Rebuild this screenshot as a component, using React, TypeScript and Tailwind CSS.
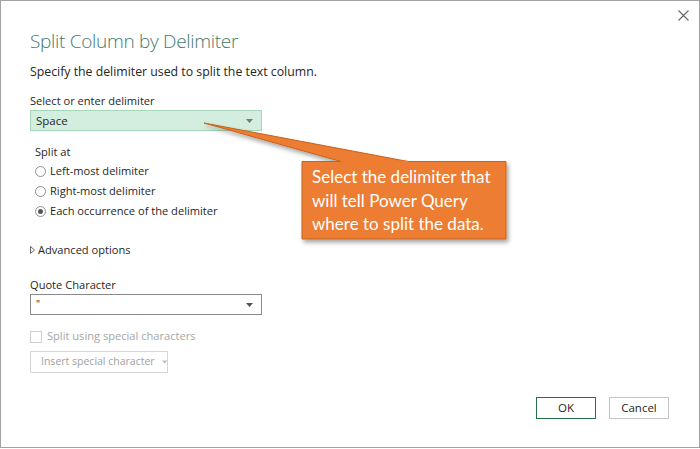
import React from 'react';

function Caret({ className = '' }: { className?: string }) {
  return (
    <svg width="7" height="4" viewBox="0 0 7 4" className={className}>
      <path d="M0 0h7L3.5 4z" fill="currentColor" />
    </svg>
  );
}

function Radio({ label, checked }: { label: string; checked?: boolean }) {
  return (
    <label className="flex items-center gap-[4px] h-[20px]">
      <span className="w-[11px] h-[11px] rounded-full border border-[#8f8f8f] bg-white flex items-center justify-center">
        {checked && <span className="w-[5px] h-[5px] rounded-full bg-[#555]" />}
      </span>
      <span>{label}</span>
    </label>
  );
}

function Callout() {
  return (
    <>
      <svg className="absolute left-0 top-0 pointer-events-none" width="700" height="449">
        <defs>
          <filter id="sh" x="-10%" y="-10%" width="130%" height="140%">
            <feDropShadow dx="2" dy="3" stdDeviation="2" floodColor="#000" floodOpacity="0.35" />
          </filter>
        </defs>
        <g filter="url(#sh)">
          <path
            d="M203 122 L340 160.5 L301 160.5 L301 238 L505 238 L505 160.5 L407 160.5 Z"
            fill="#ed7d31"
            stroke="#c5621c"
            strokeWidth="1"
          />
        </g>
        <path d="M340 160.5 L407 160.5" stroke="#ed7d31" strokeWidth="1.5" />
      </svg>
      <div className="absolute left-[301px] top-[162px] w-[204px] pl-[10px] pt-[2px] text-white text-[17px] leading-[23.5px] font-['Lato','Noto_Sans',sans-serif]">
        Select the delimiter that will tell Power Query where to split the data.
      </div>
    </>
  );
}

export default function App() {
  return (
    <div className="relative w-[700px] h-[448px] bg-white border border-[#a3a3a3] font-['Open_Sans','Noto_Sans',sans-serif] text-[11.1px] text-[#333]">
      <button className="absolute right-[8px] top-[6px] w-[16px] h-[16px] flex items-center justify-center text-[#6b6b6b]">
        <svg width="11" height="11" viewBox="0 0 11 11">
          <path d="M0.5 0.5L10.5 10.5M10.5 0.5L0.5 10.5" stroke="currentColor" strokeWidth="1.2" />
        </svg>
      </button>

      <div className="pl-[29px] pt-[26px] flex flex-col">
        <h1 className="text-[19px] font-light text-[#3f7b6e] leading-[28px] tracking-[-0.3px]">Split Column by Delimiter</h1>
        <p className="mt-[8px] text-[12.3px] leading-[18px] text-[#262626]">Specify the delimiter used to split the text column.</p>

        <p className="mt-[12px] leading-[16px] text-[#262626]">Select or enter delimiter</p>
        <div className="mt-[1px] w-[232px] h-[21px] bg-[#d3eedf] border border-[#a5d7b9] flex items-center justify-between pl-[5px] pr-[8px] text-[#262626]">
          <span className="text-[11.5px]">Space</span>
          <Caret className="text-[#777]" />
        </div>

        <div className="mt-[13px] pl-[5px] flex flex-col text-[#262626]">
          <p className="leading-[16px]">Split at</p>
          <div className="mt-[1px] flex flex-col">
            <Radio label="Left-most delimiter" />
            <Radio label="Right-most delimiter" />
            <Radio label="Each occurrence of the delimiter" checked />
          </div>
        </div>

        <div className="mt-[20px] flex items-center gap-[3px] text-[#262626] h-[18px]">
          <svg width="5" height="8" viewBox="0 0 5 8">
            <path d="M0.5 0.5L4.5 4L0.5 7.5Z" fill="none" stroke="#555" strokeWidth="0.9" />
          </svg>
          <span>Advanced options</span>
        </div>

        <p className="mt-[18px] leading-[16px] text-[#262626]">Quote Character</p>
        <div className="mt-[1px] w-[232px] h-[21px] bg-white border border-[#8a8a8a] flex items-center justify-between pl-[5px] pr-[8px] text-[#262626]">
          <span className="text-[10px]">"</span>
          <Caret className="text-[#555]" />
        </div>

        <label className="mt-[15px] flex items-center gap-[5px] text-[#a6a6a6] h-[13px]">
          <span className="w-[12px] h-[12px] border border-[#cfcfcf] bg-white" />
          <span>Split using special characters</span>
        </label>

        <div className="mt-[8px] w-[138px] h-[22px] border border-[#d6d6d6] flex items-center pl-[10px] gap-[7px] text-[#a0a0a0] text-[10.5px] whitespace-nowrap">
          <span>Insert special character</span>
          <Caret className="text-[#bdbdbd]" />
        </div>
      </div>

      <div className="absolute right-[30px] top-[396px] flex gap-[13px]">
        <button className="w-[60px] h-[22px] border border-[#217346] text-[#262626] text-[11.5px] flex items-center justify-center">OK</button>
        <button className="w-[60px] h-[22px] border border-[#c4c4c4] text-[#262626] text-[11.5px] flex items-center justify-center">Cancel</button>
      </div>

      <Callout />
    </div>
  );
}
